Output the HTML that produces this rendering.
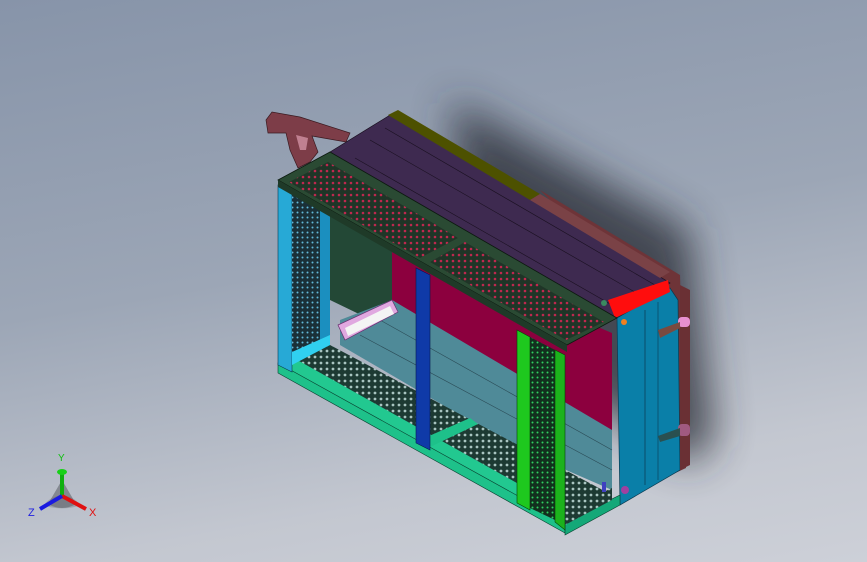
<!DOCTYPE html><html><head><style>
html,body{margin:0;padding:0;width:867px;height:562px;overflow:hidden}
body{background:linear-gradient(170deg,#8794a9 0%,#9ca6b6 45%,#c3c7d0 80%,#cdd0d8 100%)}
svg{position:absolute;left:0;top:0}
</style></head><body>
<svg width="867" height="562" viewBox="0 0 867 562">
<defs>
<filter id="b" x="-50%" y="-50%" width="200%" height="200%"><feGaussianBlur stdDeviation="20"/></filter>
<pattern id="m" width="6" height="6" patternUnits="userSpaceOnUse"><rect width="6" height="6" fill="#1f3527"/><circle cx="3" cy="3" r="1.3" fill="#c0284f"/></pattern>
<pattern id="mf" width="6" height="6" patternUnits="userSpaceOnUse"><rect width="6" height="6" fill="#1d3a33"/><circle cx="3" cy="3" r="1.4" fill="#a8c4c0"/></pattern>
<pattern id="mg" width="5" height="5" patternUnits="userSpaceOnUse"><rect width="5" height="5" fill="#12301e"/><circle cx="2.5" cy="2.5" r="1" fill="#2fd060"/></pattern>
<pattern id="mc" width="5" height="5" patternUnits="userSpaceOnUse"><rect width="5" height="5" fill="#1a3038"/><circle cx="2.5" cy="2.5" r="1" fill="#60b8d8"/></pattern>
</defs>
<!-- shadow -->
<polygon points="450,100 690,230 715,440 690,465 480,330" fill="#2a2f38" opacity="0.8" filter="url(#b)"/>
<!-- handle -->
<polygon points="266,120 272,112 300,117 350,133 346,142 312,136 318,152 310,162 298,168 290,150 286,133 268,133" fill="#7d3d48" stroke="#3a1a20" stroke-width="0.7"/>
<polygon points="296,135 308,138 306,150 300,150" fill="#c08090"/>
<!-- back brown frame right -->
<polygon points="540,190 680,275 686,468 660,480 650,300" fill="#6e3438"/>
<!-- roof purple -->
<polygon points="330,152 395,112 670,283 617,318" fill="#3e2a50" stroke="#1a1020" stroke-width="0.7"/>
<line x1="355" y1="158" x2="612" y2="305" stroke="#1a1020" stroke-width="0.6"/>
<line x1="370" y1="140" x2="640" y2="295" stroke="#1a1020" stroke-width="0.6"/>
<line x1="385" y1="128" x2="655" y2="285" stroke="#1a1020" stroke-width="0.6"/>
<polygon points="388,115 398,110 540,194 530,200" fill="#4d5100"/>
<polygon points="530,200 540,194 670,272 660,278" fill="#7a4246"/>
<!-- interior back wall -->
<polygon points="330,205 392,240 392,330 330,300" fill="#234836"/>
<polygon points="392,240 612,333 612,440 392,300" fill="#8c003e"/>
<polygon points="340,320 392,300 612,430 612,490 520,450 340,345" fill="#4f8a98"/>
<line x1="360" y1="335" x2="612" y2="470" stroke="#2a4a55" stroke-width="0.6"/>
<line x1="380" y1="320" x2="612" y2="450" stroke="#2a4a55" stroke-width="0.6"/>
<!-- pink cylinder -->
<polygon points="338,325 392,300 398,312 345,340" fill="#e0a8e0" stroke="#6a3070" stroke-width="0.7"/>
<polygon points="345,328 390,306 394,314 348,336" fill="#f4f4f4"/>
<!-- right face blue -->
<polygon points="617,318 670,288 678,300 680,470 620,505" fill="#0a7fa8" stroke="#0a3a50" stroke-width="0.7"/>
<line x1="645" y1="310" x2="645" y2="485" stroke="#0a3a50" stroke-width="0.7"/>
<line x1="658" y1="302" x2="658" y2="480" stroke="#0a3a50" stroke-width="0.6"/>
<polygon points="608,300 668,280 670,292 615,318" fill="#ff0d0d"/>
<polygon points="680,285 690,290 690,465 680,470" fill="#6a3034"/>
<rect x="678" y="317" width="12" height="10" rx="4" fill="#e890d0"/>
<rect x="678" y="424" width="12" height="12" rx="4" fill="#a05a80"/>
<polygon points="658,330 680,322 680,328 660,338" fill="#7a4a40"/>
<polygon points="658,436 680,428 680,436 660,442" fill="#2a5050"/>
<!-- floor frame -->
<polygon points="278,365 330,345 612,495 565,520" fill="url(#mf)"/>
<polygon points="278,365 292,357 565,510 565,522" fill="#22c890"/>
<polygon points="278,373 565,533 565,522 278,363" fill="#1ec18a" stroke="#0a4030" stroke-width="0.6"/>
<polygon points="565,522 620,495 620,505 565,535" fill="#14a878" stroke="#0a4030" stroke-width="0.6"/>
<polygon points="420,440 470,418 478,424 428,448" fill="#1ec18a"/>
<!-- left post & mesh -->
<polygon points="278,185 292,192 292,372 278,365" fill="#27a9d6" stroke="#0a3a50" stroke-width="0.6"/>
<polygon points="292,192 320,205 320,340 292,360" fill="url(#mc)"/>
<polygon points="320,205 330,210 330,345 320,340" fill="#1b8fbf"/>
<polygon points="292,352 330,335 330,345 292,365" fill="#30d0f0"/>
<!-- blue post -->
<polygon points="416,268 430,275 430,450 416,443" fill="#0f3aa8" stroke="#051a50" stroke-width="0.6"/>
<!-- green right post -->
<polygon points="517,330 530,337 530,510 517,503" fill="#1ec81e" stroke="#064006" stroke-width="0.6"/>
<polygon points="530,337 555,350 555,520 530,508" fill="url(#mg)"/>
<polygon points="555,350 565,355 565,530 555,522" fill="#1cb21c" stroke="#064006" stroke-width="0.6"/>
<polygon points="565,510 612,488 612,500 565,525" fill="url(#mf)"/>
<!-- top frame -->
<polygon points="278,180 330,152 617,318 567,345" fill="#2a4a33" stroke="#0d1a10" stroke-width="0.8"/>
<polygon points="289,182 328,162 423,217 385,238" fill="url(#m)"/>
<polygon points="385,238 423,217 458,238 420,258" fill="url(#m)"/>
<polygon points="430,262 465,242 604,322 566,340" fill="url(#m)"/>
<polygon points="278,180 567,345 567,352 278,187" fill="#1f3a28"/>
<!-- small knobs -->
<circle cx="604" cy="303" r="3" fill="#3a8a60"/>
<circle cx="624" cy="322" r="3" fill="#f08020"/>
<circle cx="625" cy="490" r="4" fill="#a040a0"/>
<rect x="602" y="482" width="4" height="10" fill="#4040c0"/>
<!-- triad -->
<path d="M44,505 A22,22 0 0 1 80,505 A22,8 0 0 1 44,505Z" fill="#8a8e96" opacity="0.6"/>
<path d="M48,504 L62,480 L76,504 Q62,512 48,504Z" fill="#60646c" opacity="0.6"/>
<line x1="62" y1="496" x2="62" y2="472" stroke="#10b010" stroke-width="4"/>
<ellipse cx="62" cy="472" rx="5" ry="3" fill="#18d018"/>
<line x1="62" y1="496" x2="86" y2="509" stroke="#e01010" stroke-width="4"/>
<line x1="62" y1="496" x2="40" y2="509" stroke="#1a1ae0" stroke-width="4"/>
<text x="58" y="461" font-family="Liberation Sans,sans-serif" font-size="10" fill="#10c010">Y</text>
<text x="89" y="516" font-family="Liberation Sans,sans-serif" font-size="11" fill="#e01010">X</text>
<text x="28" y="516" font-family="Liberation Sans,sans-serif" font-size="11" fill="#2020e0">Z</text>
</svg>
</body></html>
